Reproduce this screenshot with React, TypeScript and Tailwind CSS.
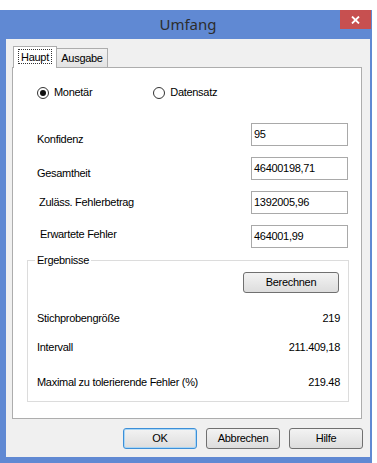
import React from "react";

function Radio({ checked, label, className }: { checked?: boolean; label: string; className?: string }) {
  return (
    <div className={"flex items-center gap-[5px] " + (className ?? "")}>
      <div className="w-[12px] h-[12px] rounded-full border border-[#333333] bg-white flex items-center justify-center">
        {checked && <div className="w-[6px] h-[6px] rounded-full bg-[#111111]" />}
      </div>
      <span className="text-[11px] leading-[13px] text-black">{label}</span>
    </div>
  );
}

function Field({ label, value, labelCls }: { label: string; value: string; labelCls: string }) {
  return (
    <div className="flex h-[23px] items-start justify-between">
      <span className={"text-[11px] leading-[13px] text-black " + labelCls}>{label}</span>
      <div className="w-[97px] h-[23px] border border-[#a9a9a9] bg-white pl-[2px] flex items-center">
        <span className="text-[11px] leading-[13px] text-black">{value}</span>
      </div>
    </div>
  );
}

function Btn({ label, primary, className }: { label: string; primary?: boolean; className?: string }) {
  return (
    <div
      className={
        "h-[21px] rounded-[3px] border flex items-center justify-center text-[11px] leading-[13px] text-black bg-gradient-to-b from-[#f3f3f3] to-[#dddddd] " +
        (primary ? "border-[#3c8fd8] shadow-[inset_0_0_0_1px_#a9d6f5] " : "border-[#707070] ") +
        (className ?? "")
      }
    >
      {label}
    </div>
  );
}

export default function App() {
  return (
    <div className="w-[377px] h-[463px] bg-white pt-[10px] font-['Liberation_Sans',Arial,sans-serif] tracking-[-0.3px]">
      <div className="w-[372px] h-[453px] bg-[#6089d3] flex flex-col">
        {/* title bar */}
        <div className="relative h-[29px] flex items-center justify-center">
          <span className="font-['Noto_Sans',sans-serif] tracking-normal text-[15px] leading-[18px] text-[#2d2d2d] ml-[4px] -mt-[1px]">Umfang</span>
          <div className="absolute right-[1px] top-0 w-[31px] h-[19px] bg-[#c75050] flex items-center justify-center">
            <svg width="9" height="8" viewBox="0 0 9 8">
              <path d="M1 0.5 L8 7.5 M8 0.5 L1 7.5" stroke="white" strokeWidth="1.8" />
            </svg>
          </div>
        </div>
        {/* client area */}
        <div className="ml-[6px] w-[364px] h-[418px] bg-[#f0f0f0] pt-[7px] pl-[6px] pr-[6px]">
          {/* tabs */}
          <div className="flex items-end h-[21px] pl-[1px]">
            <div className="relative z-10 w-[44px] h-[22px] -mb-[1px] bg-white border border-b-0 border-[#adadad] flex items-start justify-center pt-[2px]">
              <span className="border border-dotted border-[#333333] px-[2px] text-[11px] leading-[12px] h-[15px] pt-[1px] text-black">Haupt</span>
            </div>
            <div className="w-[51px] h-[19px] bg-gradient-to-b from-[#f2f2f2] to-[#e3e3e3] border border-l-0 border-b-0 border-[#adadad] flex items-center justify-center">
              <span className="text-[11px] leading-[13px] text-black">Ausgabe</span>
            </div>
          </div>
          {/* tab page */}
          <div className="w-[350px] h-[352px] bg-white border border-[#adadad] flex flex-col">
            <div className="flex mt-[18px] pl-[24px] h-[13px]">
              <Radio checked label="Monetär" />
              <Radio label="Datensatz" className="ml-[61px]" />
            </div>
            <div className="flex flex-col gap-[11px] mt-[24px] pl-[24px] pr-[13px]">
              <Field label="Konfidenz" value="95" labelCls="mt-[10px]" />
              <Field label="Gesamtheit" value="46400198,71" labelCls="mt-[10px]" />
              <Field label="Zuläss. Fehlerbetrag" value="1392005,96" labelCls="mt-[5px] ml-[2px]" />
              <Field label="Erwartete Fehler" value="464001,99" labelCls="mt-[3px] ml-[3px]" />
            </div>
            <fieldset className="ml-[14px] mt-[6px] w-[322px] h-[148px] border border-[#dcdcdc] pl-[9px] pr-[8px] pb-[14px] flex flex-col">
              <legend className="-ml-[2px] px-[2px] text-[11px] leading-[13px] text-black">Ergebnisse</legend>
              <div className="flex justify-end mt-[5px] pr-[1px]">
                <Btn label="Berechnen" className="w-[96px]" />
              </div>
              <div className="flex justify-between mt-[19px] text-[11px] leading-[13px] text-black">
                <span>Stichprobengröße</span>
                <span>219</span>
              </div>
              <div className="flex justify-between mt-[16px] text-[11px] leading-[13px] text-black">
                <span>Intervall</span>
                <span>211.409,18</span>
              </div>
              <div className="flex justify-between mt-[22px] text-[11px] leading-[13px] text-black">
                <span>Maximal zu tolerierende Fehler (%)</span>
                <span>219.48</span>
              </div>
            </fieldset>
          </div>
          {/* buttons */}
          <div className="flex justify-end gap-[9px] mt-[9px] pr-[1px]">
            <Btn label="OK" primary className="w-[74px]" />
            <Btn label="Abbrechen" className="w-[74px]" />
            <Btn label="Hilfe" className="w-[74px]" />
          </div>
        </div>
      </div>
    </div>
  );
}
